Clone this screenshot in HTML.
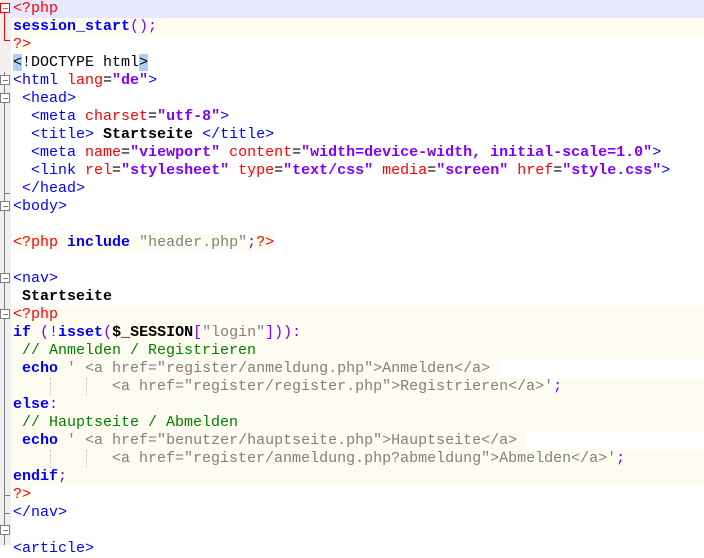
<!DOCTYPE html>
<html><head><meta charset="utf-8"><style>
body{margin:0;width:704px;height:545px;overflow:hidden;background:#fff;position:relative;font-family:"Liberation Mono","Courier New",monospace;font-size:15px}
.m{position:absolute;left:0;top:0;width:11px;height:545px;background:#f0f0f0}
.l{position:absolute;left:13px;height:18px;line-height:18px;white-space:pre;color:#000}
.full{position:absolute;left:11px;right:0;height:18px}
.t{color:#0000ff}.a{color:#ff0000}.v{color:#8000ff;font-weight:bold}.r{color:#ff0000}
.k{color:#0000ff;font-weight:bold}.p{color:#8000ff}.s{color:#808080}.c{color:#008000}.b{font-weight:bold}
.bg{background:#fefbf0}.hl{background:#add0f0}
.box{position:absolute;left:0;width:8px;height:8px;border:1px solid #808080;background:#fff}
.box:after{content:"";position:absolute;left:2px;top:4px;width:5px;height:1px;background:#808080}
.vl{position:absolute;left:4px;width:1px;background:#808080}
.g{position:absolute;width:0;border-left:1px dotted #c0c0c0;height:18px}
</style></head><body>
<div class="m"></div>
<div class="full" style="top:0;background:#e8e8ff"></div>
<div class="full bg" style="top:18px"></div>
<div class="full bg" style="top:306px;height:180px"></div>
<div class="full" style="top:360px;height:18px;left:500px;background:#fff"></div>
<div class="full" style="top:432px;height:18px;left:526px;background:#fff"></div>
<div class="vl" style="top:9px;height:32px;background:#ff0000"></div>
<div style="position:absolute;left:4px;top:40px;width:6px;height:1px;background:#ff0000"></div>
<div class="vl" style="top:72px;height:473px"></div>
<div class="box" style="top:3px;border-color:#ff0000"></div>
<div class="box" style="top:75px"></div><div class="box" style="top:93px"></div>
<div class="box" style="top:201px"></div><div class="box" style="top:273px"></div>
<div class="box" style="top:309px"></div><div class="box" style="top:525px"></div>
<div style="position:absolute;left:4px;top:193px;width:6px;height:1px;background:#808080"></div>
<div style="position:absolute;left:4px;top:495px;width:6px;height:1px;background:#808080"></div>
<div style="position:absolute;left:4px;top:513px;width:6px;height:1px;background:#808080"></div>
<div class="g" style="left:50px;top:378px"></div><div class="g" style="left:86px;top:378px"></div>
<div class="g" style="left:50px;top:450px"></div><div class="g" style="left:86px;top:450px"></div>

<div class="l" style="top:0"><span class="r">&lt;?php</span></div>
<div class="l" style="top:18px"><span class="k">session_start</span><span class="p">();</span></div>
<div class="l" style="top:36px"><span class="r bg">?&gt;</span></div>
<div class="l" style="top:54px"><span class="hl">&lt;</span>!DOCTYPE html<span class="hl">&gt;</span></div>
<div class="l" style="top:72px"><span class="t">&lt;html </span><span class="a">lang</span>=<span class="v">"de"</span><span class="t">&gt;</span></div>
<div class="l" style="top:90px"> <span class="t">&lt;head&gt;</span></div>
<div class="l" style="top:108px">  <span class="t">&lt;meta </span><span class="a">charset</span>=<span class="v">"utf-8"</span><span class="t">&gt;</span></div>
<div class="l" style="top:126px">  <span class="t">&lt;title&gt;</span><span class="b"> Startseite </span><span class="t">&lt;/title&gt;</span></div>
<div class="l" style="top:144px">  <span class="t">&lt;meta </span><span class="a">name</span>=<span class="v">"viewport"</span> <span class="a">content</span>=<span class="v">"width=device-width, initial-scale=1.0"</span><span class="t">&gt;</span></div>
<div class="l" style="top:162px">  <span class="t">&lt;link </span><span class="a">rel</span>=<span class="v">"stylesheet"</span> <span class="a">type</span>=<span class="v">"text/css"</span> <span class="a">media</span>=<span class="v">"screen"</span> <span class="a">href</span>=<span class="v">"style.css"</span><span class="t">&gt;</span></div>
<div class="l" style="top:180px"> <span class="t">&lt;/head&gt;</span></div>
<div class="l" style="top:198px"><span class="t">&lt;body&gt;</span></div>
<div class="l" style="top:234px"><span class="bg"><span class="r">&lt;?php</span> <span class="k">include</span> <span class="s">"header.php"</span><span class="p">;</span><span class="r">?&gt;</span></span></div>
<div class="l" style="top:270px"><span class="t">&lt;nav&gt;</span></div>
<div class="l" style="top:288px"> <span class="b">Startseite</span></div>
<div class="l" style="top:306px"><span class="r">&lt;?php</span></div>
<div class="l" style="top:324px"><span class="k">if</span> <span class="p">(!</span><span class="k">isset</span><span class="p">(</span><span class="b">$_SESSION</span><span class="p">[</span><span class="s">"login"</span><span class="p">])):</span></div>
<div class="l" style="top:342px"> <span class="c">// Anmelden / Registrieren</span></div>
<div class="l" style="top:360px"> <span class="k">echo</span> <span class="s">' &lt;a href="register/anmeldung.php"&gt;Anmelden&lt;/a&gt;</span></div>
<div class="l" style="top:378px">           <span class="s">&lt;a href="register/register.php"&gt;Registrieren&lt;/a&gt;'</span><span class="p">;</span></div>
<div class="l" style="top:396px"><span class="k">else</span><span class="p">:</span></div>
<div class="l" style="top:414px"> <span class="c">// Hauptseite / Abmelden</span></div>
<div class="l" style="top:432px"> <span class="k">echo</span> <span class="s">' &lt;a href="benutzer/hauptseite.php"&gt;Hauptseite&lt;/a&gt;</span></div>
<div class="l" style="top:450px">           <span class="s">&lt;a href="register/anmeldung.php?abmeldung"&gt;Abmelden&lt;/a&gt;'</span><span class="p">;</span></div>
<div class="l" style="top:468px"><span class="k">endif</span><span class="p">;</span></div>
<div class="l" style="top:486px"><span class="r bg">?&gt;</span></div>
<div class="l" style="top:504px"><span class="t">&lt;/nav&gt;</span></div>
<div class="l" style="top:540px"><span class="t">&lt;article&gt;</span></div>
</body></html>
